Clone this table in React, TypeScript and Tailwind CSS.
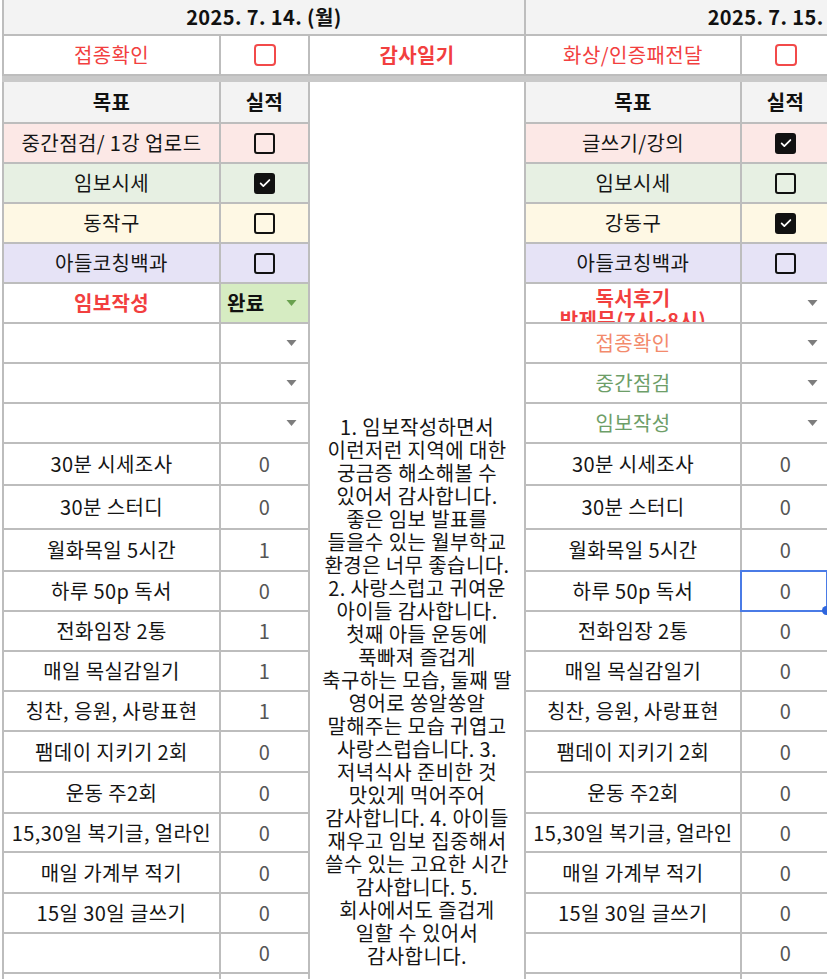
import React from "react";

type Row = {
  goal: string;
  goalClass?: string;
  bg?: string;
  kind: "check" | "done" | "drop" | "num";
  checked?: boolean;
  value?: string;
  h: string;
  selected?: boolean;
};

const heights = [
  "h-[40px]", "h-[40px]", "h-[40px]", "h-[40px]", "h-[40px]", "h-[40px]", "h-[40px]", "h-[40px]",
  "h-[42px]", "h-[44px]", "h-[42px]", "h-[40px]", "h-[40px]", "h-[40px]", "h-[40px]", "h-[41px]",
  "h-[41px]", "h-[39px]", "h-[41px]", "h-[40px]", "h-[40px]", "h-[20px]",
];

const pink = "bg-[#fce8e6]";
const green = "bg-[#e7f0e3]";
const yellow = "bg-[#fef8e4]";
const purple = "bg-[#e6e3f6]";

const lowerGoals = [
  "30분 시세조사",
  "30분 스터디",
  "월화목일 5시간",
  "하루 50p 독서",
  "전화임장 2통",
  "매일 목실감일기",
  "칭찬, 응원, 사랑표현",
  "팸데이 지키기 2회",
  "운동 주2회",
  "15,30일 복기글, 얼라인",
  "매일 가계부 적기",
  "15일 30일 글쓰기",
  "",
];

const leftNums = ["0", "0", "1", "0", "1", "1", "1", "0", "0", "0", "0", "0", "0"];
const rightNums = ["0", "0", "0", "0", "0", "0", "0", "0", "0", "0", "0", "0", "0"];

function buildRows(top: Row[], nums: string[], selectedIndex: number): Row[] {
  const rows: Row[] = [...top];
  lowerGoals.forEach((g, i) => {
    rows.push({ goal: g, kind: "num", value: nums[i], h: "", selected: i === selectedIndex });
  });
  rows.push({ goal: "", kind: "num", value: "", h: "" });
  return rows.map((r, i) => ({ ...r, h: heights[i] }));
}

const leftRows = buildRows(
  [
    { goal: "중간점검/ 1강 업로드", bg: pink, kind: "check", h: "" },
    { goal: "임보시세", bg: green, kind: "check", checked: true, h: "" },
    { goal: "동작구", bg: yellow, kind: "check", h: "" },
    { goal: "아들코칭백과", bg: purple, kind: "check", h: "" },
    { goal: "임보작성", goalClass: "text-[#f23f3f] font-bold", kind: "done", h: "" },
    { goal: "", kind: "drop", h: "" },
    { goal: "", kind: "drop", h: "" },
    { goal: "", kind: "drop", h: "" },
  ],
  leftNums,
  -1
);

const rightRows = buildRows(
  [
    { goal: "글쓰기/강의", bg: pink, kind: "check", checked: true, h: "" },
    { goal: "임보시세", bg: green, kind: "check", h: "" },
    { goal: "강동구", bg: yellow, kind: "check", checked: true, h: "" },
    { goal: "아들코칭백과", bg: purple, kind: "check", h: "" },
    { goal: "독서후기\n박제무(7시~8시)", goalClass: "text-[#f23f3f] font-bold", kind: "drop", h: "" },
    { goal: "접종확인", goalClass: "text-[#f38a6c]", kind: "drop", h: "" },
    { goal: "중간점검", goalClass: "text-[#6d9e68]", kind: "drop", h: "" },
    { goal: "임보작성", goalClass: "text-[#6d9e68]", kind: "drop", h: "" },
  ],
  rightNums,
  3
);

const diary = [
  "1. 임보작성하면서",
  "이런저런 지역에 대한",
  "궁금증 해소해볼 수",
  "있어서 감사합니다.",
  "좋은 임보 발표를",
  "들을수 있는 월부학교",
  "환경은 너무 좋습니다.",
  "2. 사랑스럽고 귀여운",
  "아이들 감사합니다.",
  "첫째 아들 운동에",
  "푹빠져 즐겁게",
  "축구하는 모습, 둘째 딸",
  "영어로 쏭알쏭알",
  "말해주는 모습 귀엽고",
  "사랑스럽습니다. 3.",
  "저녁식사 준비한 것",
  "맛있게 먹어주어",
  "감사합니다. 4. 아이들",
  "재우고 임보 집중해서",
  "쓸수 있는 고요한 시간",
  "감사합니다. 5.",
  "회사에서도 즐겁게",
  "일할 수 있어서",
  "감사합니다.",
];

function CheckBox({ checked, red }: { checked?: boolean; red?: boolean }) {
  if (red) {
    return <span className="block w-[22px] h-[22px] rounded-[4px] border-[2.5px] border-[#f24a4a]" />;
  }
  if (checked) {
    return (
      <span className="flex w-[21px] h-[21px] items-center justify-center rounded-[3px] bg-[#111]">
        <svg viewBox="0 0 16 16" className="w-[14px] h-[14px]">
          <path d="M3 8.4l3.1 3.1L13 4.6" stroke="#fff" strokeWidth="2" fill="none" strokeLinecap="round" strokeLinejoin="round" />
        </svg>
      </span>
    );
  }
  return <span className="block w-[21px] h-[21px] rounded-[3px] border-[2.5px] border-[#111]" />;
}

function Arrow({ color }: { color: string }) {
  return (
    <svg viewBox="0 0 10 6" className="w-[11px] h-[6px]">
      <path d="M0 0h10L5 6z" fill={color} />
    </svg>
  );
}

function GoalTable({ rows, first }: { rows: Row[]; first?: boolean }) {
  return (
    <div className={first ? "flex flex-col flex-none border-l-2 border-[#bdbdbd]" : "flex flex-col flex-none"}>
      <div className="flex h-[42px] bg-[#f3f3f3] border-b-2 border-[#bdbdbd] font-bold text-[#111]">
        <div className={first ? "w-[217px] flex items-center justify-center border-r-2 border-[#bdbdbd]" : "w-[216px] flex items-center justify-center border-r-2 border-[#bdbdbd]"}>
          목표
        </div>
        <div className="w-[89px] flex items-center justify-center border-r-2 border-[#bdbdbd]">실적</div>
      </div>
      {rows.map((r, i) => (
        <div key={i} className={`flex flex-none ${r.h} ${r.bg ?? "bg-white"} border-b-2 border-[#bdbdbd]`}>
          <div
            className={`${first ? "w-[217px]" : "w-[216px]"} flex justify-center overflow-hidden whitespace-pre-line text-center leading-[22px] border-r-2 border-[#bdbdbd] ${
              r.goal.includes("\n") ? "items-start pt-[3px]" : "items-center"
            } ${r.goalClass ?? "text-[#151515]"}`}
          >
            {r.goal}
          </div>
          <div className="relative w-[89px] flex-none border-r-2 border-[#bdbdbd]">
            {r.kind === "check" && (
              <div className="h-full flex items-center justify-center">
                <CheckBox checked={r.checked} />
              </div>
            )}
            {r.kind === "done" && (
              <div className="h-full flex items-center justify-between pl-[6px] pr-[11px] bg-[#d6ecc2] font-bold text-[#111]">
                <span>완료</span>
                <Arrow color="#6aa14f" />
              </div>
            )}
            {r.kind === "drop" && (
              <div className="h-full flex items-center justify-end pr-[11px]">
                <Arrow color="#7d7d7d" />
              </div>
            )}
            {r.kind === "num" && (
              <div className="h-full flex items-center justify-center text-[#555]">{r.value}</div>
            )}
            {r.selected && (
              <div className="absolute -left-[2px] -top-[2px] right-[1px] -bottom-[2px] border-2 border-[#4a7be6]">
                <span className="absolute -bottom-[5px] -right-[5px] w-[9px] h-[9px] rounded-full bg-[#2f66dd]" />
              </div>
            )}
          </div>
        </div>
      ))}
    </div>
  );
}

export default function App() {
  return (
    <div className="w-[827px] h-[979px] overflow-hidden bg-white pl-[2px] font-['Noto_Sans_CJK_KR','Noto_Sans',sans-serif] text-[20px] tracking-[0.02em] text-[#151515]">
      <div className="w-[1100px]">
        <div className="flex h-[36px] bg-[#f3f3f3] border-b-2 border-l-2 border-[#bdbdbd] font-bold text-[#111]">
          <div className="w-[522px] flex-none flex items-center justify-center border-r-2 border-[#bdbdbd]">
            2025. 7. 14. (월)
          </div>
          <div className="w-[521px] flex-none flex items-center justify-center border-r-2 border-[#bdbdbd]">
            2025. 7. 15. (화)
          </div>
        </div>
        <div className="flex h-[40px] border-b-2 border-l-2 border-[#bdbdbd] text-[#f23f3f]">
          <div className="w-[217px] flex items-center justify-center border-r-2 border-[#bdbdbd]">접종확인</div>
          <div className="w-[89px] flex items-center justify-center border-r-2 border-[#bdbdbd]">
            <CheckBox red />
          </div>
          <div className="w-[216px] flex items-center justify-center border-r-2 border-[#bdbdbd] font-bold">감사일기</div>
          <div className="w-[216px] flex items-center justify-center border-r-2 border-[#bdbdbd]">화상/인증패전달</div>
          <div className="w-[89px] flex items-center justify-center border-r-2 border-[#bdbdbd]">
            <CheckBox red />
          </div>
        </div>
        <div className="h-[6px] bg-[#c9c9c9]" />
        <div className="flex items-start">
          <GoalTable rows={leftRows} first />
          <div className="w-[216px] h-[897px] flex-none flex flex-col justify-end pb-[12px] border-r-2 border-[#bdbdbd] text-center leading-[23px] text-[#151515]">
            {diary.map((l, i) => (
              <div key={i} className="whitespace-nowrap">{l}</div>
            ))}
          </div>
          <GoalTable rows={rightRows} />
        </div>
      </div>
    </div>
  );
}
